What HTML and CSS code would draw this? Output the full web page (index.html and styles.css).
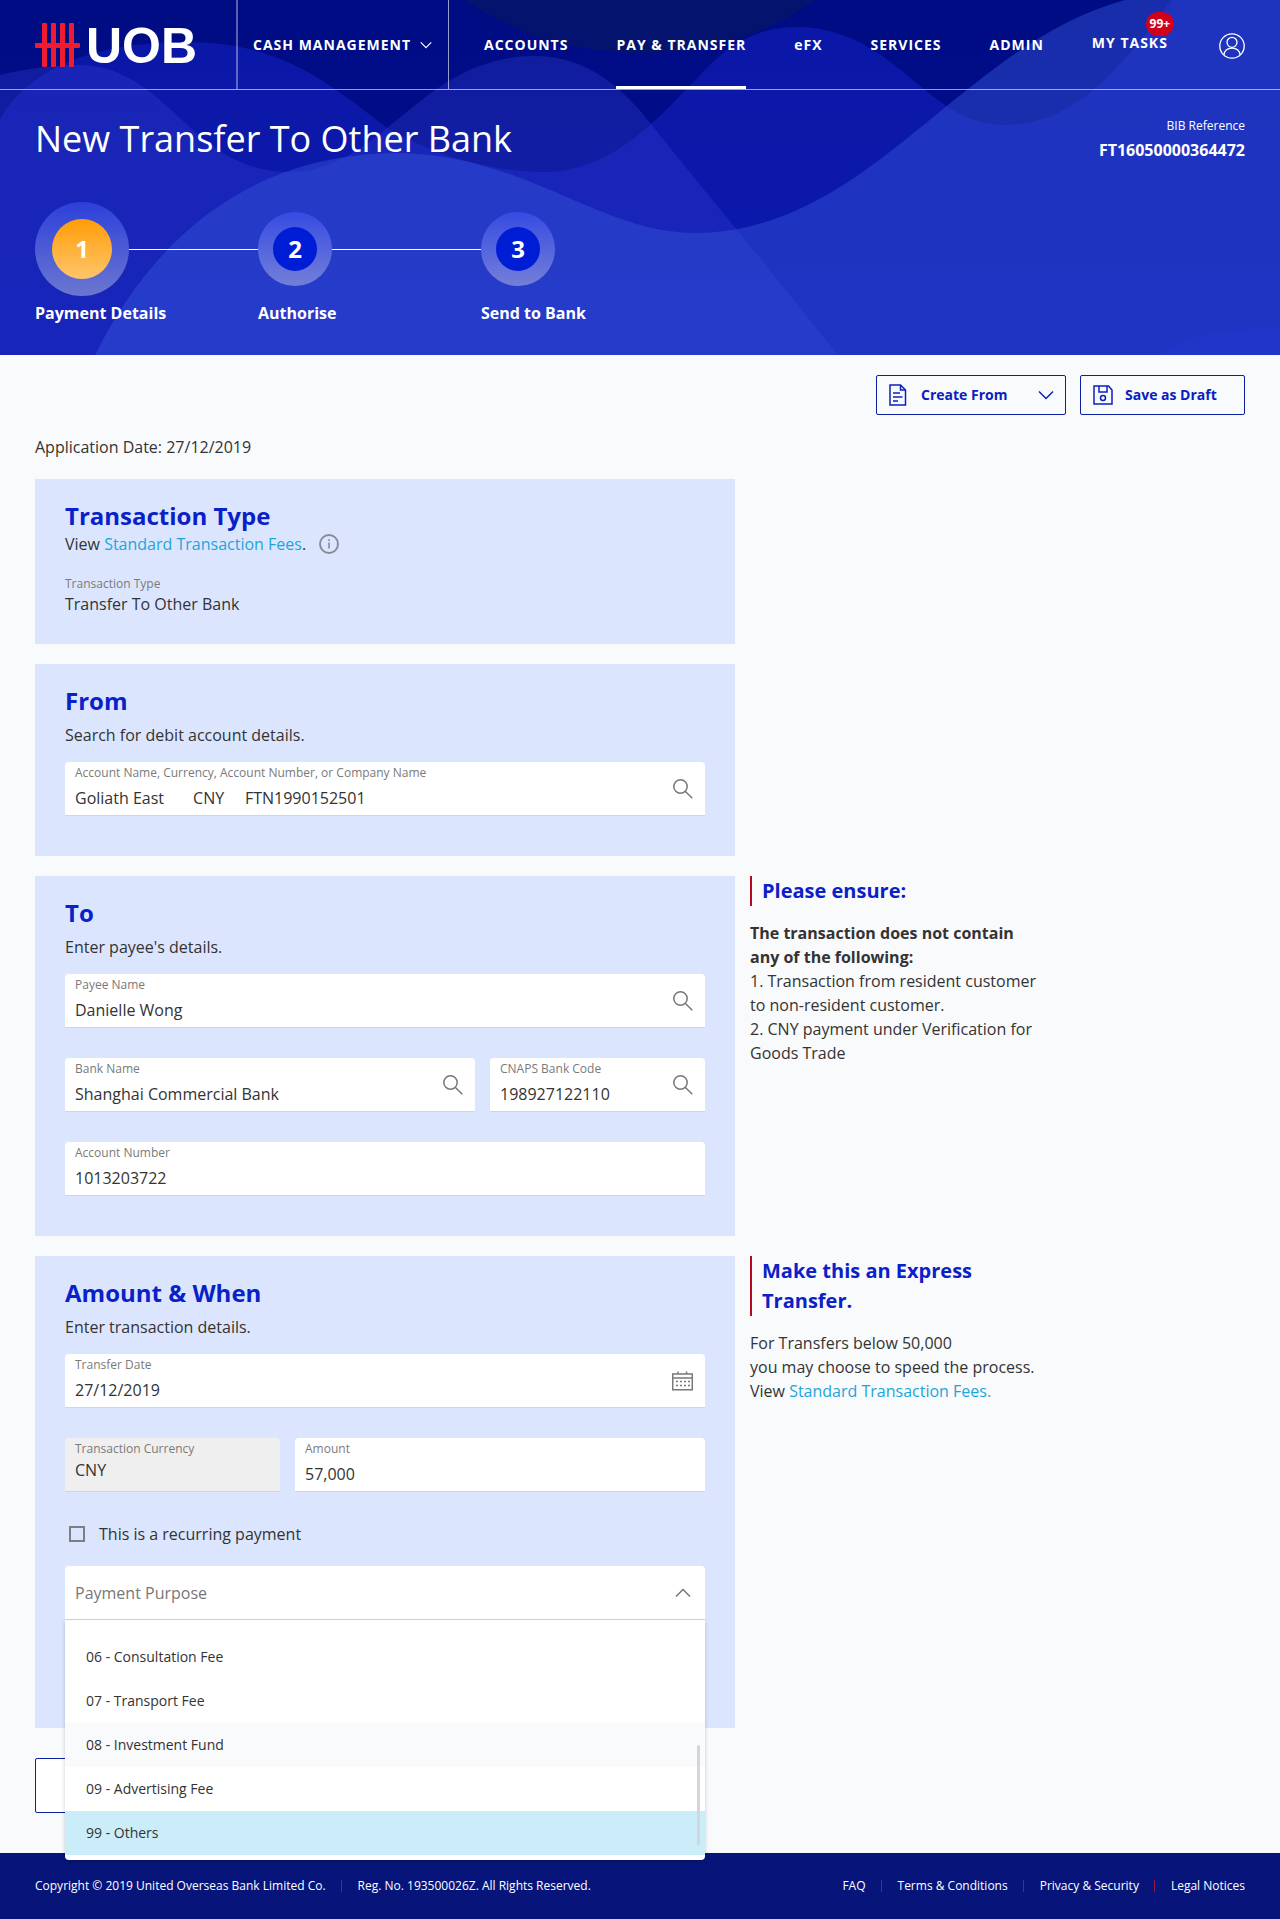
FILE: index.html
```html
<!DOCTYPE html>
<html lang="en">
<head>
<meta charset="utf-8">
<meta name="viewport" content="width=device-width, initial-scale=1">
<title>New Transfer To Other Bank - UOB</title>
<link rel="stylesheet" href="styles.css">
</head>
<body>
<svg class="sprite" aria-hidden="true">
  <symbol id="icon-search" viewBox="0 0 20 20">
    <circle cx="7.5" cy="7.5" r="6.7"/><path d="M12.2 12.2L19.3 19.3"/>
  </symbol>
  <symbol id="icon-chevron" viewBox="0 0 16 10">
    <path d="M1 1.5L8 8.5L15 1.5"/>
  </symbol>
</svg>

<header class="masthead">
  <svg class="waves" viewBox="0 0 1280 355" preserveAspectRatio="none" aria-hidden="true">
    <path fill="#04146e" d="M465 0C520 38 580 53 650 53C720 50 770 32 815 0Z"/>
    <path fill="#1f2ee4" fill-opacity=".35" d="M0 355V120C25 72 90 42 185 42C280 42 325 80 390 130C450 162 500 172 550 172C620 168 665 110 705 70C735 38 765 27 797 27C865 27 905 77 945 105C965 119 985 125 1005 125C1080 125 1125 60 1172 0H1280V355Z"/>
    <path fill="#3340d4" fill-opacity=".33" d="M0 355V75C30 68 55 65 80 65C170 67 190 172 290 172C385 170 420 56 535 56C575 56 610 75 642 113C690 173 737 229 838 355Z"/>
    <path fill="#3557dc" fill-opacity=".45" d="M95 355C145 255 235 153 400 153C525 155 600 233 695 233C870 232 960 45 1125 0H1280V355Z"/>
    <path fill="#2743e0" fill-opacity=".2" d="M1160 355C1185 336 1215 328 1280 328V355Z"/>
  </svg>

  <div class="topbar">
    <a class="logo" href="#" aria-label="UOB home">
      <svg width="45" height="44" viewBox="0 0 45 44" aria-hidden="true">
        <g fill="#ee1c2e">
          <rect x="7" y="0" width="5" height="44" rx="1"/>
          <rect x="16" y="0" width="5" height="44" rx="1"/>
          <rect x="25" y="0" width="5" height="44" rx="1"/>
          <rect x="34" y="0" width="5" height="44" rx="1"/>
          <rect x="0" y="20" width="45" height="5" rx="1"/>
        </g>
      </svg>
      <span class="logo-text">UOB</span>
    </a>
    <button class="product" type="button">CASH MANAGEMENT
      <svg class="icon" width="12" height="8"><use href="#icon-chevron"/></svg>
    </button>
    <nav class="menu" aria-label="Main">
      <a href="#">ACCOUNTS</a>
      <a class="current" href="#" aria-current="page">PAY &amp; TRANSFER</a>
      <a href="#">eFX</a>
      <a href="#">SERVICES</a>
      <a href="#">ADMIN</a>
      <a class="tasks" href="#">MY TASKS<span class="badge">99+</span></a>
    </nav>
    <a class="profile" href="#" aria-label="Profile">
      <svg width="26" height="26" viewBox="0 0 26 26" fill="none" stroke="#fff" stroke-width="1.3" aria-hidden="true">
        <circle cx="13" cy="13" r="12.2"/><circle cx="13" cy="9.3" r="5"/>
        <path d="M4.8 22C5.6 17.5 8.8 15.2 13 15.2S20.4 17.5 21.2 22"/>
      </svg>
    </a>
  </div>

  <div class="title-row">
    <h1>New Transfer To Other Bank</h1>
    <dl class="reference">
      <dt>BIB Reference</dt>
      <dd>FT16050000364472</dd>
    </dl>
  </div>

  <ol class="steps">
    <li class="step active"><span class="track"><span class="ring"><span class="dot">1</span></span></span>Payment Details</li>
    <li class="step"><span class="track"><span class="ring"><span class="dot">2</span></span></span>Authorise</li>
    <li class="step"><span class="track"><span class="ring"><span class="dot">3</span></span></span>Send to Bank</li>
  </ol>
</header>

<main class="content">
  <div class="toolbar">
    <button class="outline create" type="button">
      <svg class="icon" width="18" height="22" viewBox="0 0 18 22" aria-hidden="true">
        <path d="M1 1H11.5L16.500 6V21H1Z"/><path d="M11.500 1V6H16.500M4 9H11M4 13H13.500M4 17H9"/>
      </svg>
      <span>Create From</span>
      <svg class="icon" width="16" height="10"><use href="#icon-chevron"/></svg>
    </button>
    <button class="outline" type="button">
      <svg class="icon" width="20" height="20" viewBox="0 0 20 20" aria-hidden="true">
        <path d="M1 1H15.500L19 5V19H1Z"/><path d="M6 1V7H14V1"/><circle cx="10" cy="13" r="2.500"/>
      </svg>
      <span>Save as Draft</span>
    </button>
  </div>

  <p class="date">Application Date: 27/12/2019</p>

  <form class="sections">
    <section class="card type">
      <h2>Transaction Type</h2>
      <p class="fees">View&nbsp;<a href="#">Standard Transaction Fees</a>.
        <svg class="info" width="20" height="20" viewBox="0 0 20 20" role="img" aria-label="Information">
          <circle cx="10" cy="10" r="9" fill="none" stroke="#868b96" stroke-width="1.900"/>
          <path d="M10 8.500V14.500M10 5.200V7" stroke="#868b96" stroke-width="1.600"/>
        </svg>
      </p>
      <dl class="readout">
        <dt>Transaction Type</dt>
        <dd>Transfer To Other Bank</dd>
      </dl>
    </section>

    <section class="card">
      <h2>From</h2>
      <p class="hint">Search for debit account details.</p>
      <div class="fields">
        <div class="field">
          <div class="entry">
            <label for="debit">Account Name, Currency, Account Number, or Company Name</label>
            <input id="debit" type="text" value="Goliath East       CNY     FTN1990152501">
          </div>
          <button type="button" aria-label="Search accounts"><svg class="icon" width="20" height="20"><use href="#icon-search"/></svg></button>
        </div>
      </div>
    </section>

    <section class="card">
      <h2>To</h2>
      <p class="hint">Enter payee's details.</p>
      <div class="fields">
        <div class="field">
          <div class="entry">
            <label for="payee">Payee Name</label>
            <input id="payee" type="text" value="Danielle Wong">
          </div>
          <button type="button" aria-label="Search payees"><svg class="icon" width="20" height="20"><use href="#icon-search"/></svg></button>
        </div>
        <div class="pair wide-first">
          <div class="field">
            <div class="entry">
              <label for="bank">Bank Name</label>
              <input id="bank" type="text" value="Shanghai Commercial Bank">
            </div>
            <button type="button" aria-label="Search banks"><svg class="icon" width="20" height="20"><use href="#icon-search"/></svg></button>
          </div>
          <div class="field">
            <div class="entry">
              <label for="cnaps">CNAPS Bank Code</label>
              <input id="cnaps" type="text" value="198927122110">
            </div>
            <button type="button" aria-label="Search bank codes"><svg class="icon" width="20" height="20"><use href="#icon-search"/></svg></button>
          </div>
        </div>
        <div class="field">
          <div class="entry">
            <label for="account">Account Number</label>
            <input id="account" type="text" value="1013203722">
          </div>
        </div>
      </div>
    </section>
    <aside class="note">
      <h3>Please ensure:</h3>
      <p><strong>The transaction does not contain any of the following:</strong></p>
      <p>1. Transaction from resident customer to non-resident customer.</p>
      <p>2. CNY payment under Verification for Goods Trade</p>
    </aside>

    <section class="card amount">
      <h2>Amount &amp; When</h2>
      <p class="hint">Enter transaction details.</p>
      <div class="fields">
        <div class="field">
          <div class="entry">
            <label for="when">Transfer Date</label>
            <input id="when" type="text" value="27/12/2019">
          </div>
          <button type="button" aria-label="Choose date">
            <svg class="icon" width="21" height="20" viewBox="0 0 21 20" aria-hidden="true">
              <path d="M.7 3H20.300V18.800H.7ZM.7 7H20.300M6 .5V3M14.500 .5V3"/>
              <path stroke-dasharray="2 2" d="M4 10.500H18M4 14.500H18"/>
            </svg>
          </button>
        </div>
        <div class="pair wide-last">
          <div class="field locked">
            <div class="entry">
              <label for="currency">Transaction Currency</label>
              <input id="currency" type="text" value="CNY" readonly>
            </div>
          </div>
          <div class="field">
            <div class="entry">
              <label for="amount">Amount</label>
              <input id="amount" type="text" value="57,000">
            </div>
          </div>
        </div>
        <label class="check"><input type="checkbox"> This is a recurring payment</label>
      </div>
      <div class="dropdown">
        <select aria-label="Payment Purpose">
          <option>Payment Purpose</option>
        </select>
        <svg class="icon arrow" width="16" height="10"><use href="#icon-chevron"/></svg>
        <div class="options">
          <ul role="listbox" aria-label="Payment Purpose options">
            <li role="option">06 - Consultation Fee</li>
            <li role="option">07 - Transport Fee</li>
            <li class="tinted" role="option">08 - Investment Fund</li>
            <li role="option">09 - Advertising Fee</li>
            <li class="chosen" role="option" aria-selected="true">99 - Others</li>
          </ul>
          <span class="thumb"></span>
        </div>
      </div>
    </section>
    <aside class="note">
      <h3>Make this an Express Transfer.</h3>
      <p>For Transfers below 50,000<br>you may choose to speed the process.<br>View <a href="#">Standard Transaction Fees.</a></p>
    </aside>
  </form>

  <button class="back" type="button" aria-label="Back"></button>
</main>

<footer class="footer">
  <p><span>Copyright © 2019 United Overseas Bank Limited Co.</span><span>Reg. No. 193500026Z. All Rights Reserved.</span></p>
  <nav aria-label="Footer"><a href="#">FAQ</a><a href="#">Terms &amp; Conditions</a><a href="#">Privacy &amp; Security</a><a href="#">Legal Notices</a></nav>
</footer>
</body>
</html>
```

FILE: styles.css
```css
* {
  box-sizing: border-box;
}

body,
h1,
h2,
h3,
p,
dl,
dd,
ol,
ul {
  margin: 0;
  padding: 0;
}

body {
  background: #f9fafc;
  color: #333;
  font: 16px/24px "Open Sans", "Noto Sans", sans-serif;
}

ol,
ul {
  list-style: none;
}

a {
  color: #1ca5dc;
  text-decoration: none;
}

button,
input,
select {
  font: inherit;
  color: inherit;
}

button {
  cursor: pointer;
}

.sprite {
  display: none;
}

.icon {
  display: block;
  flex: none;
  fill: none;
  stroke: currentColor;
  stroke-width: 1.5;
}

/* Header */
.masthead {
  position: relative;
  padding-bottom: 30px;
  background: linear-gradient(#000c83, #000f92);
  color: #fff;
}

.waves {
  position: absolute;
  inset: 0;
  width: 100%;
  height: 100%;
}

.topbar,
.title-row,
.steps {
  position: relative;
}

.topbar {
  display: flex;
  height: 90px;
  border-bottom: 1px solid rgba(255, 255, 255, 0.6);
  font-size: 14px;
  font-weight: 700;
  letter-spacing: 1px;
}

.topbar a {
  color: #fff;
}

.logo {
  display: flex;
  align-items: center;
  gap: 6px;
  width: 238px;
  padding-left: 35px;
  border-right: 2px solid rgba(255, 255, 255, 0.35);
}

.logo-text {
  padding-top: 2px;
  font: 700 50px/50px "Liberation Sans", Arial, sans-serif;
  letter-spacing: 0;
}

.product {
  display: flex;
  align-items: center;
  gap: 9px;
  width: 211px;
  padding: 0 0 0 15px;
  border: 0;
  border-right: 1px solid rgba(255, 255, 255, 0.6);
  background: none;
  letter-spacing: 1px;
}

.menu {
  display: flex;
  flex: 1;
  gap: 48px;
  padding-left: 35px;
}

.menu a {
  display: flex;
  align-items: center;
  border-top: 3px solid transparent;
  border-bottom: 3px solid transparent;
  white-space: nowrap;
}

.menu .current {
  border-bottom-color: #fff;
}

.menu .tasks {
  position: relative;
  padding-bottom: 4px;
}

.badge {
  position: absolute;
  top: 9px;
  right: -6px;
  width: 28px;
  height: 24px;
  border-radius: 12px;
  background: #d0021b;
  font-size: 12px;
  line-height: 24px;
  letter-spacing: 0;
  text-align: center;
}

.profile {
  display: flex;
  align-items: center;
  padding: 3px 35px 0 0;
}

.title-row {
  display: flex;
  justify-content: space-between;
  padding: 24px 35px 0;
}

h1 {
  font-size: 36px;
  line-height: 50px;
  font-weight: 400;
}

.reference {
  text-align: right;
}

.reference dt {
  font-size: 12px;
}

.reference dd {
  font-weight: 700;
}

.steps {
  display: flex;
  padding: 38px 35px 0;
}

.step {
  width: 223px;
  font-weight: 700;
}

.track {
  display: flex;
  align-items: center;
  height: 94px;
  margin-bottom: 5px;
}

.step:not(:last-child) .track::after {
  content: "";
  flex: 1;
  height: 1px;
  background: #fff;
}

.ring {
  display: grid;
  place-items: center;
  width: 74px;
  height: 74px;
  border-radius: 50%;
  background: linear-gradient(#364be2, #747fd8);
}

.dot {
  display: grid;
  place-items: center;
  width: 44px;
  height: 44px;
  border-radius: 50%;
  background: #001dd6;
  font-size: 24px;
  font-weight: 700;
}

.active .ring {
  width: 94px;
  height: 94px;
  background: linear-gradient(#2c40da, #6b77d0);
}

.active .dot {
  width: 60px;
  height: 60px;
  background: linear-gradient(#ff9d08, #ffc56b);
}

/* Page body */
.content {
  padding: 20px 35px 40px;
}

.toolbar {
  display: flex;
  justify-content: flex-end;
  gap: 14px;
}

.outline {
  display: flex;
  align-items: center;
  gap: 12px;
  width: 165px;
  height: 40px;
  padding: 0 12px;
  border: 1px solid #0b1fa0;
  border-radius: 2px;
  background: none;
  color: #0a20c0;
  font-size: 14px;
  font-weight: 700;
}

.outline.create {
  gap: 14px;
  width: 190px;
  padding-right: 11px;
}

.create span {
  flex: 1;
  text-align: left;
}

.date {
  padding: 20px 0;
}

.sections {
  display: grid;
  grid-template-columns: minmax(0, 700px) 290px;
  gap: 20px 15px;
}

.card {
  grid-column: 1;
  padding: 21px 30px 40px;
  background: #dbe6fe;
}

.card.type {
  padding-bottom: 28px;
}

.card.amount {
  padding-bottom: 108px;
}

h2 {
  color: #0a20c8;
  font-size: 24px;
  line-height: 32px;
  font-weight: 700;
}

.fees {
  display: flex;
  align-items: center;
}

.info {
  margin-left: 13px;
}

.readout {
  margin-top: 20px;
}

.readout dt,
.field label {
  color: #7a7a7a;
  font-size: 12px;
  line-height: 16px;
}

.hint {
  margin: 6px 0 15px;
}

.fields {
  display: grid;
  gap: 30px;
}

.pair {
  display: grid;
  gap: 15px;
}

.wide-first {
  grid-template-columns: minmax(0, 1fr) 215px;
}

.wide-last {
  grid-template-columns: 215px minmax(0, 1fr);
}

.field {
  display: flex;
  align-items: center;
  height: 54px;
  padding: 0 12px 0 10px;
  border-bottom: 1px solid #d5d5d8;
  border-radius: 4px 4px 0 0;
  background: #fff;
}

.entry {
  display: flex;
  flex: 1;
  flex-direction: column;
  gap: 5px;
  min-width: 0;
  padding-bottom: 2px;
}

.field input {
  width: 100%;
  height: 24px;
  padding: 0;
  border: 0;
  outline: 0;
  background: none;
}

.field button {
  padding: 0;
  border: 0;
  background: none;
  color: #777;
}

.field.locked {
  background: #efefef;
}

.locked .entry {
  gap: 1px;
  padding-bottom: 6px;
}

.check {
  display: flex;
  align-items: center;
  gap: 14px;
  padding-left: 4px;
}

.check input {
  appearance: none;
  width: 16px;
  height: 16px;
  margin: 0;
  border: 2px solid #7c7f86;
}

.dropdown {
  position: relative;
  margin-top: 20px;
}

.dropdown select {
  display: block;
  appearance: none;
  width: 100%;
  height: 54px;
  padding: 0 40px 0 10px;
  border: 0;
  border-bottom: 1px solid #d5d5d8;
  border-radius: 4px 4px 0 0;
  outline: 0;
  background: #fff;
  color: #777;
}

.arrow {
  position: absolute;
  top: 22px;
  right: 14px;
  color: #777;
  transform: rotate(180deg);
}

.options {
  position: absolute;
  top: 100%;
  left: 0;
  z-index: 1;
  width: 100%;
  padding: 15px 0 5px;
  border-radius: 0 0 4px 4px;
  background: #fff;
  box-shadow: 0 2px 4px rgba(0, 0, 0, 0.2);
  font-size: 14px;
}

.options li {
  padding: 10px 21px;
}

.options .tinted {
  background: #f9fafc;
}

.options .chosen {
  background: #cbedf9;
}

.thumb {
  position: absolute;
  right: 5px;
  bottom: 15px;
  width: 3px;
  height: 100px;
  border-radius: 2px;
  background: #d3d5d8;
}

.note {
  grid-column: 2;
}

.note h3 {
  margin-bottom: 15px;
  padding-left: 10px;
  border-left: 2px solid #b8081f;
  color: #0a20c8;
  font-size: 20px;
  line-height: 30px;
  font-weight: 700;
}

.back {
  display: block;
  width: 210px;
  height: 55px;
  margin-top: 30px;
  border: 1px solid #0b1fa0;
  border-radius: 2px;
  background: #fff;
}

/* Footer */
.footer {
  display: flex;
  justify-content: space-between;
  padding: 21px 35px;
  background: #07157a;
  color: #fff;
  font-size: 12px;
}

.footer a {
  color: #fff;
}

.footer p,
.footer nav {
  display: flex;
  align-items: center;
}

.footer p > * + *,
.footer nav > * + * {
  display: flex;
  align-items: center;
}

.footer p > * + *::before,
.footer nav > * + *::before {
  content: "";
  width: 1px;
  height: 12px;
  margin: 0 16px 0 15px;
  background: #a01040;
}
```
